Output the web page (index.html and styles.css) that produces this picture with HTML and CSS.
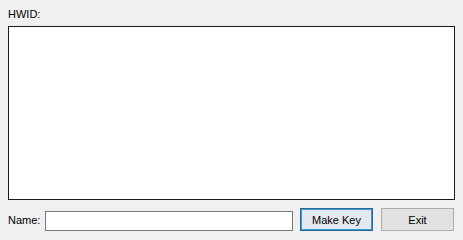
FILE: index.html
```html
<!DOCTYPE html>
<html lang="en">
<head>
    <meta charset="UTF-8">
    <title>KeyGen</title>
    <link rel="stylesheet" href="styles.css">
</head>
<body>
    <div class="window">
        <label class="hwid-label" for="hwid">HWID:</label>
        <textarea id="hwid" class="hwid-box"></textarea>

        <div class="bottom-row">
            <label class="name-label" for="name">Name:</label>
            <input type="text" id="name" class="name-input">
            <button class="btn btn-default">Make Key</button>
            <button class="btn">Exit</button>
        </div>
    </div>
</body>
</html>
```

FILE: styles.css
```css
body {
    margin: 0;
    background-color: #f0f0f0;
    font-family: "Liberation Sans", Arial, sans-serif;
    font-size: 11px;
    color: #000;
}
.window {
    width: 463px;
    height: 240px;
    padding: 0 8px;
    box-sizing: border-box;
    display: flex;
    flex-direction: column;
}
.hwid-label {
    display: block;
    height: 26px;
    line-height: 13px;
    padding-top: 8px;
    box-sizing: border-box;
}
.hwid-box {
    width: 447px;
    height: 174px;
    margin: 0;
    border: 1px solid #1a1a1a;
    background: white;
    box-sizing: border-box;
    resize: none;
    outline: none;
}
.bottom-row {
    display: flex;
    align-items: center;
    margin-top: 8px;
    height: 23px;
}
.name-label {
    width: 37px;
}
.name-input {
    width: 248px;
    height: 20px;
    margin: 3px 0 0 0;
    padding: 0 3px;
    border: 1px solid #7a7a7a;
    background: white;
    box-sizing: border-box;
    outline: none;
}
.btn {
    width: 73px;
    height: 23px;
    margin-left: 8px;
    padding: 0;
    background-color: #e1e1e1;
    border: 1px solid #adadad;
    font-family: "Liberation Sans", Arial, sans-serif;
    font-size: 11px;
    color: #000;
    box-sizing: border-box;
}
.btn-default {
    margin-left: 7px;
    border: 1px solid #2b6593;
    box-shadow: inset 0 0 0 1px #3f98d6;
    background-color: #e3e9ee;
}
```
